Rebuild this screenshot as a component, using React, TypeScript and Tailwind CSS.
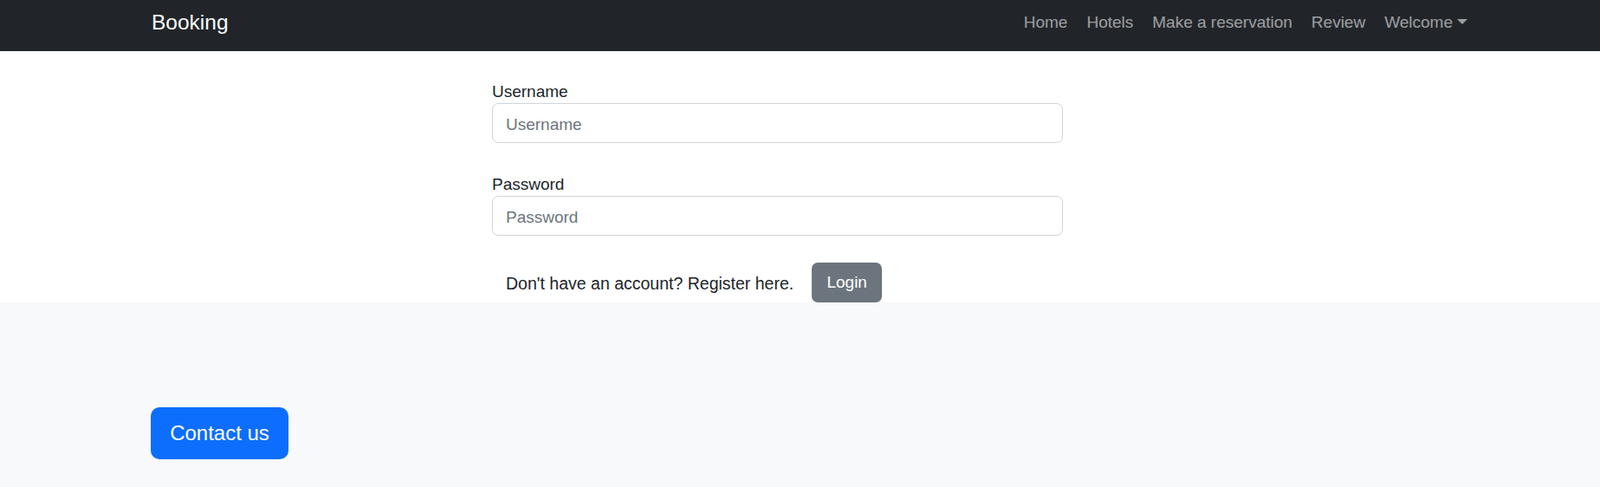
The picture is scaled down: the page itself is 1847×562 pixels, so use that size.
import React from 'react';

const links = ['Home', 'Hotels', 'Make a reservation', 'Review'];

const App: React.FC = () => {
    return (
        <div className="min-h-[562px] flex flex-col bg-white text-[#212529] text-[19px] font-['Liberation_Sans',Arial,sans-serif]">
            {/* Navbar */}
            <nav className="h-[59px] bg-[#212529] flex items-center justify-between pl-[175px] pr-[142px] pb-[7px]">
                <a href="#" className="text-white text-[24.5px] leading-none">Booking</a>
                <ul className="flex items-center">
                    {links.map((l) => (
                        <li key={l}>
                            <a href="#" className="block px-[11px] py-2 text-white/55">{l}</a>
                        </li>
                    ))}
                    <li>
                        <a href="#" className="flex items-center px-[11px] py-2 text-white/55">
                            Welcome
                            <span className="ml-[5px] mb-[2px] w-0 h-0 border-t-[6px] border-t-white/55 border-x-[6px] border-x-transparent"></span>
                        </a>
                    </li>
                </ul>
            </nav>

            {/* Login form */}
            <div className="pl-[568px] pt-[34px]">
                <div className="w-[659px]">
                    <label className="block leading-[26px]">Username</label>
                    <input
                        type="text"
                        placeholder="Username"
                        className="block w-full h-[46px] px-[15px] pt-[3px] border border-[#ced4da] rounded-[7px] placeholder:text-[#6c757d] outline-none"
                    />
                    <label className="block leading-[26px] mt-[35px]">Password</label>
                    <input
                        type="password"
                        placeholder="Password"
                        className="block w-full h-[46px] px-[15px] pt-[3px] border border-[#ced4da] rounded-[7px] placeholder:text-[#6c757d] outline-none"
                    />
                    <div className="flex items-center mt-[31px] pl-[16px] gap-[21px]">
                        <span className="pt-[3px] text-[19.5px]">Don't have an account? Register here.</span>
                        <button className="w-[81px] h-[46px] bg-[#6c757d] text-white rounded-[7px]">Login</button>
                    </div>
                </div>
            </div>

            {/* Footer */}
            <footer className="flex-1 bg-[#f8f9fa] pl-[174px] pt-[121px] pb-[32px]">
                <button className="w-[159px] h-[60px] bg-[#0d6efd] text-white text-[24px] rounded-[10px]">Contact us</button>
            </footer>
        </div>
    );
};

export default App;
